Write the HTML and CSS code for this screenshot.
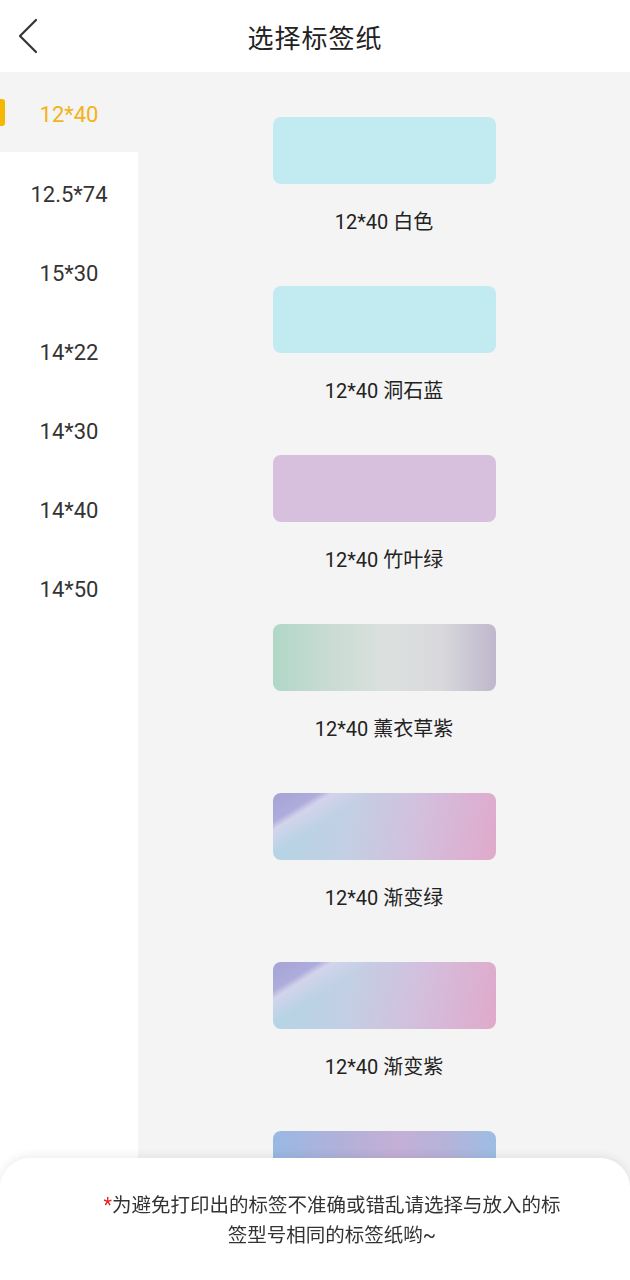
FILE: index.html
```html
<!DOCTYPE html>
<html lang="zh">
<head>
    <meta charset="UTF-8">
    <meta name="viewport" content="width=device-width, initial-scale=1.0">
    <title>选择标签纸</title>
    <link rel="stylesheet" href="styles.css">
</head>
<body>
    <header class="top-bar">
        <svg class="back-icon" width="24" height="40" viewBox="0 0 24 40">
            <polyline points="19,3 3,19 19,35" fill="none" stroke="#333" stroke-width="2.2" stroke-linecap="round" stroke-linejoin="round"/>
        </svg>
        <h1 class="page-title">选择标签纸</h1>
    </header>

    <div class="main">
        <ul class="size-list">
            <li class="size-item active">12*40</li>
            <li class="size-item">12.5*74</li>
            <li class="size-item">15*30</li>
            <li class="size-item">14*22</li>
            <li class="size-item">14*30</li>
            <li class="size-item">14*40</li>
            <li class="size-item">14*50</li>
        </ul>

        <div class="paper-list">
            <div class="paper">
                <div class="swatch swatch-white"></div>
                <div class="paper-name">12*40 白色</div>
            </div>
            <div class="paper">
                <div class="swatch swatch-blue"></div>
                <div class="paper-name">12*40 洞石蓝</div>
            </div>
            <div class="paper">
                <div class="swatch swatch-lilac"></div>
                <div class="paper-name">12*40 竹叶绿</div>
            </div>
            <div class="paper">
                <div class="swatch swatch-lavender"></div>
                <div class="paper-name">12*40 薰衣草紫</div>
            </div>
            <div class="paper">
                <div class="swatch swatch-fade"></div>
                <div class="paper-name">12*40 渐变绿</div>
            </div>
            <div class="paper">
                <div class="swatch swatch-fade"></div>
                <div class="paper-name">12*40 渐变紫</div>
            </div>
            <div class="paper">
                <div class="swatch swatch-sky"></div>
            </div>
        </div>
    </div>

    <footer class="tip-panel">
        <p class="tip-text"><span class="star">*</span>为避免打印出的标签不准确或错乱请选择与放入的标签型号相同的标签纸哟~</p>
    </footer>
</body>
</html>
```

FILE: styles.css
```css
body {
    margin: 0;
    width: 630px;
    height: 1280px;
    overflow: hidden;
    font-family: Roboto, "Noto Sans CJK SC", sans-serif;
    color: #333;
    background-color: #fff;
}

.top-bar {
    height: 72px;
    position: relative;
    display: flex;
    align-items: center;
    justify-content: center;
    background-color: #fff;
}

.back-icon {
    position: absolute;
    left: 17px;
    top: 17px;
}

.page-title {
    margin: 0;
    font-size: 26px;
    font-weight: normal;
    color: #222;
    letter-spacing: 1px;
}

.main {
    display: flex;
    height: 1208px;
}

.size-list {
    list-style: none;
    margin: 0;
    padding: 0;
    width: 138px;
    background-color: #fff;
}

.size-item {
    position: relative;
    box-sizing: border-box;
    height: 79px;
    padding-top: 5px;
    display: flex;
    align-items: center;
    justify-content: center;
    font-size: 22px;
    color: #333;
}

.size-item.active {
    height: 80px;
    background-color: #f4f4f4;
    color: #f2b318;
}

.size-item.active::before {
    content: "";
    position: absolute;
    left: 0;
    top: 27px;
    width: 5px;
    height: 27px;
    border-radius: 0 3px 3px 0;
    background-color: #f5b800;
}

.paper-list {
    flex: 1;
    background-color: #f4f4f4;
    padding-top: 45px;
    display: flex;
    flex-direction: column;
    align-items: center;
}

.paper {
    display: flex;
    flex-direction: column;
    align-items: center;
    margin-bottom: 49px;
}

.swatch {
    width: 223px;
    height: 67px;
    border-radius: 8px;
}

.swatch-white,
.swatch-blue {
    background-color: #c1ebf1;
}

.swatch-lilac {
    background-color: #d7c0de;
}

.swatch-lavender {
    background: linear-gradient(90deg, #b0d7c7 0%, #c6dbd1 22%, #dbe0de 50%, #d9d9dc 75%, #bfb7cc 100%);
}

.swatch-fade {
    background:
        linear-gradient(148deg, #a5a3d6 0%, #aeacdb 14%, rgba(214, 212, 236, 0.9) 18%, rgba(255, 255, 255, 0) 30%),
        linear-gradient(100deg, #b2d5e5 0%, #c3cfe4 35%, #d3bfdd 65%, #e0a9cb 100%);
}

.swatch-sky {
    background: linear-gradient(90deg, #98b9e3 0%, #b1b1da 30%, #c4afd5 55%, #b5b3da 78%, #9dbde3 100%);
}

.paper-name {
    margin-top: 23px;
    line-height: 30px;
    font-size: 20px;
    color: #222;
}

.tip-panel {
    position: fixed;
    left: 0;
    right: 0;
    bottom: 0;
    height: 122px;
    background-color: #fff;
    border-radius: 30px 30px 0 0;
    box-shadow: 0 -2px 10px rgba(0, 0, 0, 0.08);
}

.tip-text {
    width: 464px;
    margin: 33px 0 0 100px;
    font-size: 19.5px;
    line-height: 30px;
    text-align: center;
    color: #333;
}

.star {
    color: #e02020;
}
```
